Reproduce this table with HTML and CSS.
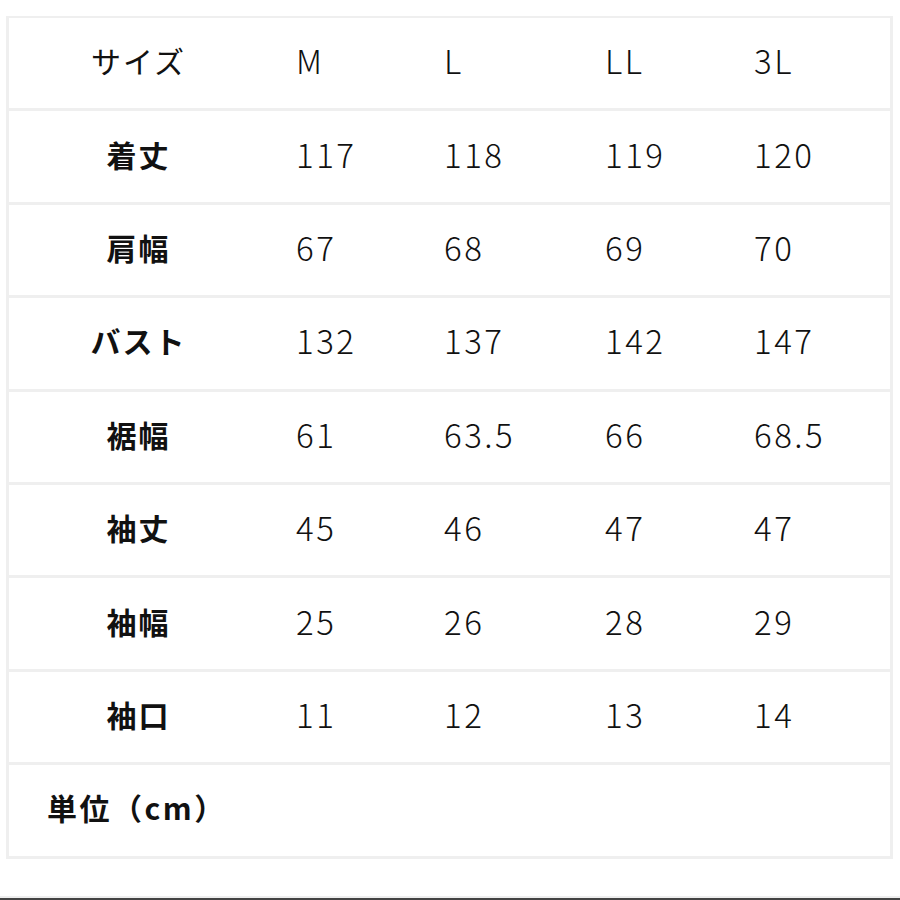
FILE: index.html
```html
<!DOCTYPE html>
<html lang="ja">
<head>
<meta charset="utf-8">
<link rel="stylesheet" href="styles.css">
</head>
<body>
<div class="page">
  <div class="table">
    <div class="row">
      <div class="label light">サイズ</div>
      <div class="val c1">M</div><div class="val c2">L</div><div class="val c3">LL</div><div class="val c4">3L</div>
    </div>
    <div class="row">
      <div class="label">着丈</div>
      <div class="val c1">117</div><div class="val c2">118</div><div class="val c3">119</div><div class="val c4">120</div>
    </div>
    <div class="row">
      <div class="label">肩幅</div>
      <div class="val c1">67</div><div class="val c2">68</div><div class="val c3">69</div><div class="val c4">70</div>
    </div>
    <div class="row">
      <div class="label">バスト</div>
      <div class="val c1">132</div><div class="val c2">137</div><div class="val c3">142</div><div class="val c4">147</div>
    </div>
    <div class="row">
      <div class="label">裾幅</div>
      <div class="val c1">61</div><div class="val c2">63.5</div><div class="val c3">66</div><div class="val c4">68.5</div>
    </div>
    <div class="row">
      <div class="label">袖丈</div>
      <div class="val c1">45</div><div class="val c2">46</div><div class="val c3">47</div><div class="val c4">47</div>
    </div>
    <div class="row">
      <div class="label">袖幅</div>
      <div class="val c1">25</div><div class="val c2">26</div><div class="val c3">28</div><div class="val c4">29</div>
    </div>
    <div class="row">
      <div class="label">袖口</div>
      <div class="val c1">11</div><div class="val c2">12</div><div class="val c3">13</div><div class="val c4">14</div>
    </div>
    <div class="row unit-row">
      <div class="unit">単位（cm）</div>
    </div>
  </div>
  <div class="bottom-bar"></div>
</div>
</body>
</html>
```

FILE: styles.css
```css
* { box-sizing: border-box; }
html, body {
  margin: 0;
  padding: 0;
  background: #ffffff;
}
body {
  width: 900px;
  height: 900px;
  overflow: hidden;
  font-family: "Noto Sans CJK JP", "Noto Sans", sans-serif;
  color: #111111;
}
.page {
  position: relative;
  width: 900px;
  height: 900px;
  padding-top: 16px;
  padding-left: 6px;
}
.table {
  width: 887px;
  border-left: 3px solid #efefef;
  border-right: 3px solid #efefef;
  border-top: 2px solid #efefef;
}
.row {
  display: grid;
  grid-template-columns: 287px 148px 161px 149px 1fr;
  height: 93.4px;
  align-items: center;
  padding-bottom: 6px;
  border-bottom: 3px solid #efefef;
}
.label {
  text-align: center;
  padding-right: 28px;
  font-size: 30px;
  font-weight: 700;
  letter-spacing: 2px;
}
.label.light {
  font-weight: 400;
}
.val {
  font-size: 33px;
  font-weight: 300;
  letter-spacing: 2.5px;
}
.unit-row {
  grid-template-columns: 1fr;
}
.unit {
  padding-left: 38px;
  font-size: 30px;
  font-weight: 700;
  letter-spacing: 2.5px;
}
.bottom-bar {
  position: absolute;
  left: 0;
  right: 0;
  bottom: 0;
  height: 4px;
  border-top: 2px solid #eeeeee;
  background: #444444;
}
```
